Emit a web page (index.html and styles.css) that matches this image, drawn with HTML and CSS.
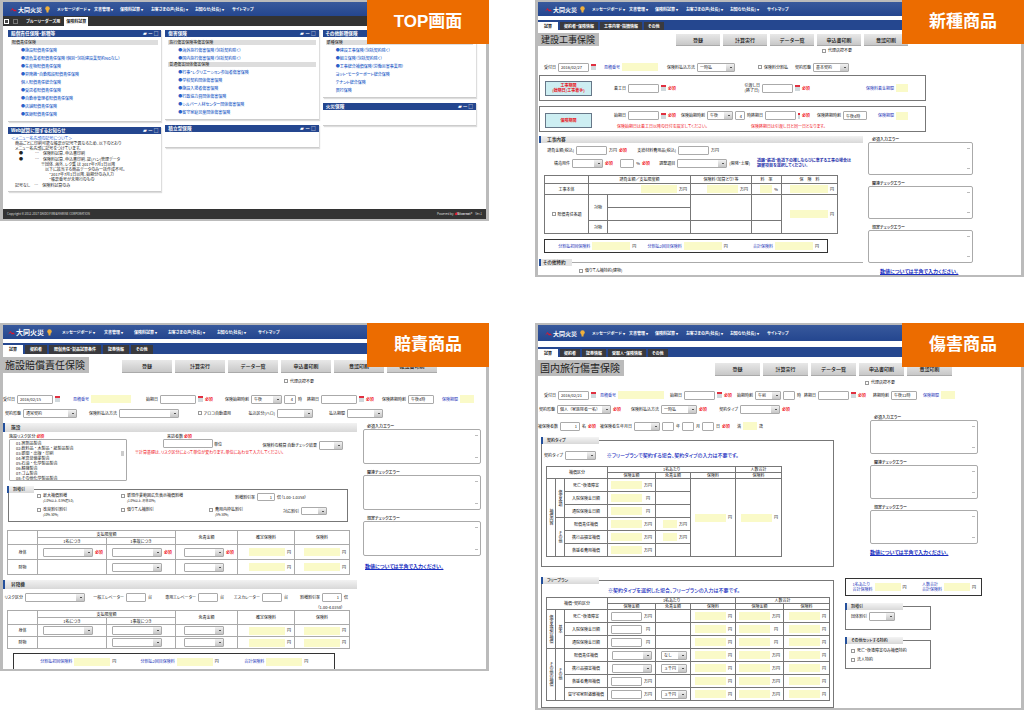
FILE: index.html
```html
<!DOCTYPE html>
<html lang="ja">
<head>
<meta charset="utf-8">
<title>保険料試算 画面一覧</title>
<link rel="stylesheet" href="styles.css">
</head>
<body>
<main class="gallery">

<section class="shot">
  <h2 class="badge">TOP画面</h2>
  <nav class="nav">
    <span class="logo"><svg class="bird" viewBox="0 0 14 10"><path d="M0 9 L5 2 L8 6 L11 5 L14 9 L10 8 L8 9 L5 5 Z"/></svg>大同火災<svg class="mascot" viewBox="0 0 10 14"><circle cx="5" cy="5" r="4.5"/><path d="M3 8h4v5H3z"/></svg></span>
    <a href="#">メッセージボード ▾</a><a href="#">文書管理 ▾</a><a href="#">保険料試算 ▾</a><a href="#">お客さまの声(社長) ▾</a><a href="#">お知らせ(社長) ▾</a><a href="#">サイトマップ</a>
  </nav>
  <div class="tabs tabs-dark"><i class="sq sq-on"></i><i class="sq"></i><a class="tab-plain" href="#">ブルーリーダーズ用</a><a class="tab on" href="#">保険料試算</a></div>
  <div class="panels">
    <div class="stack">
      <article class="panel"><h3>賠償責任保険・新種等<span>▰ ー □</span></h3>
        <h4>賠償責任保険</h4>
        <ul><li><a href="#">●施設賠償責任保険</a></li><li><a href="#">●請負業者賠償責任保険（個別・包括建設業契約NGなし）</a></li><li><a href="#">●生産物賠償責任保険</a></li><li><a href="#">●昇降機・自動階段賠償責任保険</a></li><li><a href="#">個人賠償責任総合保険</a></li><li><a href="#">●受託者賠償責任保険</a></li><li><a href="#">●自動車管理者賠償責任保険</a></li><li><a href="#">●店舗賠償責任保険</a></li><li><a href="#">●医師賠償責任保険</a></li></ul>
      </article>
      <article class="panel"><h3>Web試算に関するお知らせ<span>▰ ー □</span></h3>
        <div class="notice"><a href="#">＜メニュー名先頭の記号について＞</a>
          <p class="in1">商品ごとに印刷可能な帳票が記号で異なるため、以下のとおり</p><p class="in1">メニュー名先頭に記号をつけています。</p>
          <p class="in2">●　　　…　保険料試算、申込書印刷</p><p class="gap in2">●　　　…　保険料試算、申込書印刷、証(ハン)管理データ</p>
          <p class="in3">※団体、海外、レク集 は 2017年7月1日以降</p><p class="in3">　以下に該当する商品データのみ一括作成不可。</p><p class="in3">　　・2017年7月1日以降、始期分のみ入力</p><p class="in3">　　・帳票番号が未発行のもの</p>
          <p class="gap in1">記号なし　…　保険料試算のみ</p></div>
      </article>
    </div>
    <div class="stack">
      <article class="panel"><h3>傷害保険<span>▰ ー □</span></h3>
        <h4>旅行傷害保険等傷害保険</h4>
        <ul><li><a href="#">●海外旅行傷害保険（包括契約除く）</a></li><li><a href="#">●国内旅行傷害保険（包括契約除く）</a></li></ul>
        <h4>普通傷害団体傷害保険</h4>
        <ul><li><a href="#">●行事・レクリエーション参加者傷害保険</a></li><li><a href="#">●学校契約団体傷害保険</a></li><li><a href="#">●施設入場者傷害保険</a></li><li><a href="#">●行政協力員団体傷害保険</a></li><li><a href="#">●シルバー人材センター団体傷害保険</a></li><li><a href="#">●留守家庭児童団体傷害保険</a></li></ul>
      </article>
      <article class="panel panel-short"><h3>積立型保険<span>▰ ー □</span></h3></article>
    </div>
    <div class="stack">
      <article class="panel"><h3>その他新種保険</h3>
        <h4>新種保険</h4>
        <ul class="list-short"><li><a href="#">●建設工事保険（包括契約除く）</a></li><li><a href="#">●組立保険（包括契約除く）</a></li><li><a href="#">●工事総合補償保険（労働災害事業用）</a></li><li><a href="#">ヨット・モーターボート総合保険</a></li><li><a href="#">テナント総合保険</a></li><li><a href="#">興行保険</a></li></ul>
      </article>
      <article class="panel panel-short"><h3>火災保険<span>▰ ー □</span></h3></article>
    </div>
  </div>
  <footer class="foot"><span>Copyright © 2012-2017 DAIDO FIRE&amp;MARINE CORPORATION</span><span class="power">Powered by <b><i>●</i>Silvernet®</b>　Ver.1</span></footer>
</section>

<section class="shot">
  <h2 class="badge">新種商品</h2>
  <nav class="nav">
    <span class="logo"><svg class="bird" viewBox="0 0 14 10"><path d="M0 9 L5 2 L8 6 L11 5 L14 9 L10 8 L8 9 L5 5 Z"/></svg>大同火災<svg class="mascot" viewBox="0 0 10 14"><circle cx="5" cy="5" r="4.5"/><path d="M3 8h4v5H3z"/></svg></span>
    <a href="#">メッセージボード ▾</a><a href="#">文書管理 ▾</a><a href="#">保険料試算 ▾</a><a href="#">お客さまの声(社長) ▾</a><a href="#">お知らせ(社長) ▾</a><a href="#">サイトマップ</a>
  </nav>
  <div class="tabs"><a class="tab on" href="#">試算</a><a class="tab" href="#">契約者・保険情報</a><a class="tab" href="#">工事内容・指摘情報</a><a class="tab" href="#">その他</a></div>
  <div class="titlebar tb-b"><h1>建設工事保険</h1><div class="btns"><button type="button">登録</button><button type="button">計算実行</button><button type="button">データ一覧</button><button type="button">申込書印刷</button><button type="button">意認印刷</button></div></div>
  <div class="chkrow chk-b"><label class="c"><input type="checkbox">代理店控不要</label></div>
  <div class="row b1">
    <label class="f">受付日<input class="w30" value="2016/02/27"><i class="cal"></i></label>
    <label class="f blue">見積番号<output class="w36"></output></label>
    <label class="f">保険料払込方法<select class="w38"><option>一時払</option></select></label>
    <label class="f"><input type="checkbox">保険料分割払</label>
    <label class="f">契約形態<select class="w36"><option>基本契約</option></select></label>
  </div>
  <div class="box b2">
    <div class="teal">工事期間<br>(始期日/工事着手)</div>
    <label class="f">着工日<input class="w30"><i class="cal"></i><em>必須</em></label>
    <label class="f">引渡し日<br>(終了日)<input class="w30"><i class="cal"></i><em>必須</em></label>
    <label class="f blue">保険料着金期間<output class="w12"></output></label>
  </div>
  <div class="box b3">
    <div class="teal">保険期間</div>
    <label class="f">始期日<input class="w30"><i class="cal"></i><em>必須</em></label>
    <div class="f"><span>保険始期時刻</span><select class="w26" aria-label="午前午後"><option>午後</option></select><input class="w10" aria-label="時" value="4">時</div>
    <label class="f">終期日<input class="w30"><i class="cal"></i><em>必須</em></label>
    <label class="f">保険終期時刻<input class="w24" value="午後4時"></label>
    <label class="f blue">保険期間<output class="w12"></output></label>
    <p class="note n1">保険始期日は着工日以降の日付を設定してください。</p><p class="note n2">保険終期日は引渡し日と同一日となります。</p>
  </div>
  <div class="split split-b">
    <div>
      <h3 class="sec">工事内容</h3>
      <div class="row b4">
        <label class="f">請負金額(税込)<input class="w30">万円<em>必須</em></label>
        <label class="f">支給材料費用品(税込)<input class="w30">万円</label>
      </div>
      <div class="row b5">
        <label class="f">構造用件<select class="w30"></select><em>必須</em></label>
        <label class="f"><input class="w14" aria-label="割合">%<em>必須</em></label>
        <label class="f">調整項目<select class="w50"></select>(開発・土曜)</label>
        <p class="bluenote">道路・鉄道・軌道下の推しならびに準ずる工事の場合は<br>調整項目を選択してください。</p>
      </div>
      <table class="t tb">
        <colgroup><col><col><col><col><col><col></colgroup>
        <tr><th></th><th colspan="2">請負金額／支払限度額</th><th>保険料（加算とり）等</th><th>料　率</th><th>保　険　料</th></tr>
        <tr><td>工事本体</td><td colspan="2"><span class="v"><output class="w36"></output>万円</span></td><td><span class="v"><output class="w30"></output>万円</span></td><td><span class="v"><output class="w12"></output>%</span></td><td><span class="v"><output class="w38"></output>円</span></td></tr>
        <tr><td rowspan="3"><label class="c"><input type="checkbox">賠償責任条項</label></td><td rowspan="2">対物</td><td></td><td rowspan="2"></td><td rowspan="2"></td><td rowspan="3"><span class="v"><output class="w38"></output>円</span></td></tr>
        <tr><td></td></tr>
        <tr><td>対物</td><td></td><td></td><td></td></tr>
      </table>
      <div class="total total-b">
        <label class="f blue">分割払初回保険料<output class="w38"></output><span>円</span></label><label class="f blue">分割払2回目保険料<output class="w38"></output><span>円</span></label><label class="f blue">合計保険料<output class="w38"></output><span>円</span></label>
      </div>
      <h3 class="sec sec-line"><span>その他特約</span></h3>
      <div class="chkrow chk-b2"><label class="c"><input type="checkbox">借りてん補特約(建物)</label></div>
    </div>
    <aside class="errors">
      <label>必須入力エラー<textarea></textarea></label><label>関連チェックエラー<textarea></textarea></label><label>規定チェックエラー<textarea></textarea></label>
      <a href="#">数値については半角で入力ください。</a>
    </aside>
  </div>
</section>

<section class="shot shot-c">
  <h2 class="badge">賠責商品</h2>
  <nav class="nav">
    <span class="logo"><svg class="bird" viewBox="0 0 14 10"><path d="M0 9 L5 2 L8 6 L11 5 L14 9 L10 8 L8 9 L5 5 Z"/></svg>大同火災<svg class="mascot" viewBox="0 0 10 14"><circle cx="5" cy="5" r="4.5"/><path d="M3 8h4v5H3z"/></svg></span>
    <a href="#">メッセージボード ▾</a><a href="#">文書管理 ▾</a><a href="#">保険料試算 ▾</a><a href="#">お客さまの声(社長) ▾</a><a href="#">お知らせ(社長) ▾</a><a href="#">サイトマップ</a>
  </nav>
  <div class="tabs"><a class="tab on" href="#">試算</a><a class="tab" href="#">契約者</a><a class="tab" href="#">賠償責任・製品試算条件</a><a class="tab" href="#">証券情報</a><a class="tab" href="#">その他</a></div>
  <div class="titlebar tb-c"><h1>施設賠償責任保険</h1><div class="btns"><button type="button">登録</button><button type="button">計算実行</button><button type="button">データ一覧</button><button type="button">申込書印刷</button><button type="button">意認印刷</button><button type="button">確認書印刷</button></div></div>
  <div class="chkrow chk-c"><label class="c"><input type="checkbox">代理店控不要</label></div>
  <div class="row c1">
    <label class="f">受付日<input class="w36" value="2016/02/15"><i class="cal"></i></label>
    <label class="f blue">見積番号<output class="w40"></output></label>
    <label class="f">始期日<input class="w36"><i class="cal"></i><em>必須</em></label>
    <div class="f"><span>保険始期時刻</span><select class="w30" aria-label="午前午後"><option>午後</option></select><input class="w12" aria-label="時" value="4">時</div>
    <label class="f">終期日<input class="w36"><i class="cal"></i><em>必須</em></label>
    <label class="f">保険終期時刻<input class="w26" value="午後4時"></label>
    <label class="f blue">保険期間<output class="w14"></output></label>
  </div>
  <div class="row c2">
    <label class="f">契約形態<select class="w54"><option>通常契約</option></select></label>
    <label class="f">保険料払込方法<select class="w60"></select></label>
    <label class="f"><input type="checkbox">アロコ自動適用</label>
    <label class="f">払込区分(ハロ)<select class="w36"></select></label>
    <label class="f">払込期間<select class="w36"></select></label>
  </div>
  <div class="split split-c">
    <div>
      <h3 class="sec">施設</h3>
      <div class="risk">
        <label class="lb">施設リスク区分 <em>必須</em>
          <select size="8" class="list"><option>01:寒剤品製造</option><option>02:飲料品・木製品・紙製品製造</option><option>03:新聞・出版・印刷</option><option>04:家具装備業製造</option><option>05:石油・化学製品製造</option><option>06:精機製造</option><option>07:ゴム製造</option><option>08:その他化学製品製造</option></select></label>
        <div class="visit"><label class="lb">　来訪者数 <em>必須</em><br><input class="w50"> 単位</label><p class="note">※計算基礎は、リスク区分によって単位が変わります。単位にあわせて入力してください。</p></div>
        <label class="f">保険料の精算 自動チェック結果<select class="w24"></select></label>
      </div>
      <fieldset class="fs fs-c">
        <legend>割増引</legend>
        <div class="opts o1"><label class="c"><input type="checkbox">最大補償割増<small>(1.0%以上、0.5%超5.0)</small></label><label class="c"><input type="checkbox">新規作業範囲広告表示補償割増<small>(1.0%以上、標準10%)</small></label><label class="c">割増割引率<input class="w18" value="1">倍（1.00-1.0358）</label></div>
        <div class="opts o2"><label class="c"><input type="checkbox">改良割引割引<small>(10%-50%)</small></label><label class="c"><input type="checkbox">借りてん補割引</label><label class="c"><input type="checkbox">費用内枠払割引<small>(5%-50%)</small></label><label class="c">対応割引<select class="w26"></select></label></div>
      </fieldset>
      <table class="t tc">
        <colgroup><col><col><col><col><col><col></colgroup>
        <tr><th rowspan="2"></th><th colspan="2">支払限度額</th><th rowspan="2">免責金額</th><th rowspan="2">確定保険料</th><th rowspan="2">保険料</th></tr>
        <tr><th>1名につき</th><th>1事故につき</th></tr>
        <tr><td>身体</td><td><span class="v"><select class="w50"></select><em>必須</em></span></td><td><span class="v"><select class="w50"></select><em>必須</em></span></td><td><span class="v"><select class="w40"></select><em>必須</em></span></td><td><span class="v"><output class="w36"></output>円</span></td><td><span class="v"><output class="w36"></output>円</span></td></tr>
        <tr><td>財物</td><td></td><td><span class="v noreq"><select class="w50"></select></span></td><td><span class="v noreq"><select class="w40"></select></span></td><td><span class="v"><output class="w36"></output>円</span></td><td><span class="v"><output class="w36"></output>円</span></td></tr>
      </table>
      <h3 class="sec">昇降機</h3>
      <div class="row c3">
        <label class="f">リスク区分<select class="w60"></select></label>
        <label class="f">一般エレベーター<input class="w20">台</label>
        <label class="f">専用エレベーター<input class="w20">台</label>
        <label class="f">エスカレーター<input class="w20">台</label>
        <label class="f">割増割引率<input class="w20" value="1">倍</label>
      </div>
      <p class="hint">（1.00-4.0358）</p>
      <table class="t tc tc-low">
        <colgroup><col><col><col><col><col><col></colgroup>
        <tr><th rowspan="2"></th><th colspan="2">支払限度額</th><th rowspan="2">免責金額</th><th rowspan="2">確定保険料</th><th rowspan="2">保険料</th></tr>
        <tr><th>1名につき</th><th>1事故につき</th></tr>
        <tr><td>身体</td><td><span class="v noreq"><select class="w50"></select></span></td><td><span class="v noreq"><select class="w50"></select></span></td><td><span class="v noreq"><select class="w40"></select></span></td><td><span class="v"><output class="w36"></output>円</span></td><td><span class="v"><output class="w36"></output>円</span></td></tr>
        <tr><td>財物</td><td></td><td><span class="v noreq"><select class="w50"></select></span></td><td><span class="v noreq"><select class="w40"></select></span></td><td><span class="v"><output class="w36"></output>円</span></td><td><span class="v"><output class="w36"></output>円</span></td></tr>
      </table>
      <div class="total total-c">
        <label class="f blue">分割払初回保険料<output class="w36"></output><span>円</span></label><label class="f blue">分割払2回目保険料<output class="w36"></output><span>円</span></label><label class="f blue">合計保険料<output class="w36"></output><span>円</span></label>
      </div>
    </div>
    <aside class="errors">
      <label>必須入力エラー<textarea></textarea></label><label>関連チェックエラー<textarea></textarea></label><label>規定チェックエラー<textarea></textarea></label>
      <a href="#">数値については半角で入力ください。</a>
    </aside>
  </div>
</section>

<section class="shot shot-d">
  <h2 class="badge">傷害商品</h2>
  <nav class="nav">
    <span class="logo"><svg class="bird" viewBox="0 0 14 10"><path d="M0 9 L5 2 L8 6 L11 5 L14 9 L10 8 L8 9 L5 5 Z"/></svg>大同火災<svg class="mascot" viewBox="0 0 10 14"><circle cx="5" cy="5" r="4.5"/><path d="M3 8h4v5H3z"/></svg></span>
    <a href="#">メッセージボード ▾</a><a href="#">文書管理 ▾</a><a href="#">保険料試算 ▾</a><a href="#">お客さまの声(社長) ▾</a><a href="#">お知らせ(社長) ▾</a><a href="#">サイトマップ</a>
  </nav>
  <div class="tabs"><a class="tab on" href="#">試算</a><a class="tab" href="#">契約者</a><a class="tab" href="#">証券情報</a><a class="tab" href="#">受取人・保険情報</a><a class="tab" href="#">その他</a></div>
  <div class="titlebar tb-d"><h1>国内旅行傷害保険</h1><div class="btns"><button type="button">登録</button><button type="button">計算実行</button><button type="button">データ一覧</button><button type="button">申込書印刷</button><button type="button">意認印刷</button></div></div>
  <div class="chkrow chk-d"><label class="c"><input type="checkbox">代理店控不要</label></div>
  <div class="row d1">
    <label class="f">受付日<input class="w30" value="2016/02/21"><i class="cal"></i></label>
    <label class="f blue">見積番号<output class="w46"></output></label>
    <label class="f">始期日<input class="w30"><i class="cal"></i><em>必須</em></label>
    <div class="f"><span>始期時刻</span><select class="w26" aria-label="午前午後"><option>午前</option></select><input class="w12" aria-label="時">時</div>
    <label class="f">終期日<input class="w30"><i class="cal"></i><em>必須</em></label>
    <label class="f">終期時刻<input class="w26" value="午後12時"></label>
    <label class="f blue">保険期間<output class="w14"></output></label>
  </div>
  <div class="split split-d">
    <div>
      <div class="row d2">
        <label class="f">契約形態<select class="w54"><option>個人（家族除者一名）</option></select><em>必須</em></label>
        <label class="f">保険料払込方法<select class="w36"><option>一時払</option></select><em>必須</em></label>
        <label class="f">契約タイプ<select class="w40"></select><em>必須</em></label>
      </div>
      <div class="row d3">
        <label class="f">被保険者数<input class="w20" value="1">名<em>必須</em></label>
        <div class="f"><span>被保険者生年月日</span><select class="w26" aria-label="元号"></select><input class="w12" aria-label="年">年<input class="w12" aria-label="月">月<input class="w12" aria-label="日">日<em>必須</em></div>
        <label class="f">満<output class="w14"></output>歳</label>
      </div>
      <fieldset class="fs fs-d1">
        <legend>契約タイプ</legend>
        <div class="row d4"><label class="f">契約タイプ<select class="w30"></select></label><p class="lead">※フリープランで契約する場合、契約タイプの入力は不要です。</p></div>
        <table class="t td1">
          <colgroup><col><col><col><col><col><col><col></colgroup>
          <tr><th colspan="3" rowspan="2">補償区分</th><th colspan="3">1名あたり</th><th>人数合計</th></tr>
          <tr><th>保険金額</th><th>免責金額</th><th>保険料</th><th>保険料</th></tr>
          <tr><th rowspan="6"><span class="vt">補償内容</span></th><th rowspan="3"><span class="vt">傷害条項</span></th><th>死亡・後遺障害</th><td><span class="v"><output class="w30"></output>万円</span></td><td></td><td rowspan="6"><span class="v"><output class="w30"></output>円</span></td><td rowspan="6"><span class="v"><output class="w30"></output>円</span></td></tr>
          <tr><th>入院保険金日額</th><td><span class="v"><output class="w30"></output>円　</span></td><td></td></tr>
          <tr><th>通院保険金日額</th><td><span class="v"><output class="w30"></output>円　</span></td><td></td></tr>
          <tr><th rowspan="3"><span class="vt">その他</span></th><th>賠償責任補償</th><td><span class="v"><output class="w30"></output>万円</span></td><td><span class="v"><output class="w14"></output>万円</span></td></tr>
          <tr><th>携行品損害補償</th><td><span class="v"><output class="w30"></output>万円</span></td><td><span class="v"><output class="w14"></output>万円</span></td></tr>
          <tr><th>救援者費用補償</th><td><span class="v"><output class="w30"></output>万円</span></td><td></td></tr>
        </table>
      </fieldset>
      <fieldset class="fs fs-d2">
        <legend>フリープラン</legend>
        <p class="lead lead-2">※契約タイプを選択した場合、フリープランの入力は不要です。</p>
        <table class="t td2">
          <colgroup><col><col><col><col><col><col><col><col></colgroup>
          <tr><th colspan="3" rowspan="2">補償・契約区分</th><th colspan="3">1名あたり</th><th colspan="2">人数合計</th></tr>
          <tr><th>保険金額</th><th>免責金額</th><th>保険料</th><th>保険金額</th><th>保険料</th></tr>
          <tr><th rowspan="3"><span class="vt">傷害条項の補償</span></th><th rowspan="3"><span class="vt">基本</span></th><th>死亡・後遺障害</th><td><span class="v"><input class="w30" aria-label="死亡・後遺障害">万円</span></td><td></td><td><span class="v"><output class="w30"></output>円</span></td><td><span class="v"><output class="w30"></output>万円</span></td><td><span class="v"><output class="w30"></output>円</span></td></tr>
          <tr><th>入院保険金日額</th><td><span class="v"><input class="w30" aria-label="入院保険金日額">円　</span></td><td></td><td><span class="v"><output class="w30"></output>円</span></td><td><span class="v"><output class="w30"></output>円　</span></td><td><span class="v"><output class="w30"></output>円</span></td></tr>
          <tr><th>通院保険金日額</th><td><span class="v"><input class="w30" aria-label="通院保険金日額">円　</span></td><td></td><td><span class="v"><output class="w30"></output>円</span></td><td><span class="v"><output class="w30"></output>円　</span></td><td><span class="v"><output class="w30"></output>円</span></td></tr>
          <tr><th rowspan="4"><span class="vt">その他の補償</span></th><th rowspan="4"><span class="vt">その他</span></th><th>賠償責任補償</th><td><span class="v"><select class="w40" aria-label="賠償責任補償"></select></span></td><td><span class="v"><select class="w26" aria-label="免責"><option>なし</option></select></span></td><td><span class="v"><output class="w30"></output>円</span></td><td><span class="v"><output class="w30"></output>万円</span></td><td><span class="v"><output class="w30"></output>円</span></td></tr>
          <tr><th>携行品損害補償</th><td><span class="v"><select class="w40" aria-label="携行品損害補償"></select></span></td><td><span class="v"><select class="w26" aria-label="免責"><option>３千円</option></select></span></td><td><span class="v"><output class="w30"></output>円</span></td><td><span class="v"><output class="w30"></output>万円</span></td><td><span class="v"><output class="w30"></output>円</span></td></tr>
          <tr><th>救援者費用補償</th><td><span class="v"><input class="w30" aria-label="救援者費用補償">万円</span></td><td></td><td><span class="v"><output class="w30"></output>円</span></td><td><span class="v"><output class="w30"></output>万円</span></td><td><span class="v"><output class="w30"></output>円</span></td></tr>
          <tr><th>留守宅家財盗難補償</th><td><span class="v"><input class="w30" aria-label="留守宅家財盗難補償">万円</span></td><td><span class="v"><select class="w26" aria-label="免責"><option>３千円</option></select></span></td><td><span class="v"><output class="w30"></output>円</span></td><td><span class="v"><output class="w30"></output>万円</span></td><td><span class="v"><output class="w30"></output>円</span></td></tr>
        </table>
      </fieldset>
    </div>
    <div>
      <aside class="errors">
        <label>必須入力エラー<textarea></textarea></label><label>関連チェックエラー<textarea></textarea></label><label>規定チェックエラー<textarea></textarea></label>
        <a href="#">数値については半角で入力ください。</a>
      </aside>
      <div class="total total-d"><label class="f blue">1名あたり<br>合計保険料<output class="w26"></output><span>円</span></label><label class="f blue">人数合計<br>合計保険料<output class="w26"></output><span>円</span></label></div>
      <fieldset class="fs fs-side"><legend>割増引</legend><label class="c">団体割引<select class="w26"></select></label></fieldset>
      <fieldset class="fs fs-side fs-side2"><legend>その他セットする特約</legend><label class="c"><input type="checkbox">死亡・後遺障害のみ補償特約</label><label class="c"><input type="checkbox">法人特約</label></fieldset>
    </div>
  </div>
</section>

</main>
</body>
</html>
```
FILE: styles.css
```css
* { box-sizing: border-box; }
body {
  margin: 0; background: #fff; color: #111;
  font: 4px/5px "Noto Sans CJK JP", sans-serif;
  font-feature-settings: "palt";
}
h1, h2, h3, h4, p, ul { margin: 0; padding: 0; font-weight: 400; }
a { color: inherit; text-decoration: none; }
em { font-style: normal; font-weight: 700; color: #f01020; }
.blue { color: #2233b8; }
.blue span { color: #111; }

.gallery { display: grid; grid-template-columns: minmax(0, 1fr) minmax(0, 1fr); column-gap: 46px; row-gap: 46px; align-items: start; }
.shot { position: relative; border: solid #bbb; border-width: 2px 3px; white-space: nowrap; }
.badge {
  position: absolute; z-index: 2; top: -2px; right: -3px; width: 122px; height: 44px;
  background: #ec6c00; color: #fff; text-align: center;
  font: 700 17px/44px "Liberation Sans", "Noto Sans CJK JP", sans-serif;
  font-feature-settings: normal;
}

/* header */
.nav {
  display: grid; grid-template-columns: 54fr 37fr 26fr 31fr 44fr 37fr 254fr; align-items: center;
  height: 14px; background: linear-gradient(#38599c, #24468f); color: #fff; font-weight: 700;
}
.nav > * { min-width: 0; }
.shot-c .nav { grid-template-columns: 59fr 42fr 30fr 34fr 49fr 41fr 228fr; }
.shot-d .nav { height: 16px; }
.logo { display: flex; align-items: center; gap: 1px; padding-left: 7px; font-size: 6px; }
.shot-c .logo { padding-left: 5px; font-size: 7px; }
.bird { width: 7px; height: 5px; fill: #e0142c; }
.mascot { width: 5px; height: 7px; fill: #f0b03c; margin-left: 2px; }
.tabs { display: flex; align-items: flex-end; gap: 2px; height: 10px; margin-top: 4px; background: #25478f; color: #fff; font-weight: 700; }
.shot-c .tabs { height: 11px; }
.shot-d .tabs { margin-top: 6px; }
.tab { padding: 2px 4px; background: #3a3a3e; line-height: 4px; }
.tab.on { padding: 2px 6px; background: #fff; color: #222; }
.shot-c .tab { padding: 2px 5px; line-height: 5px; }
.shot-c .tab.on { padding: 2px 6px; }
.tabs-dark { margin-top: 0; background: #333; align-items: center; padding-left: 1px; }
.tabs-dark .tab { margin-left: 2px; line-height: 5px; padding: 2px 2px; align-self: flex-end; }
.tab-plain { margin-left: 4px; }
.sq { width: 5px; height: 5px; border: 1px solid #777; margin-right: 2px; }
.sq-on { background: #444; border-color: #fff; }

/* top page */
.panels { display: grid; grid-template-columns: repeat(3, minmax(0, 1fr)); gap: 4px; padding: 4px 10px 17px 5px; }
.stack { display: flex; flex-direction: column; gap: 5px; }
.panel { padding-bottom: 3px; border-bottom: 1px solid #ccc; box-shadow: 1px 1px 1px #ddd; }
.panel h3 { display: flex; justify-content: space-between; padding: 1px 3px; background: #24468f; color: #fff; font-weight: 700; }
.panel h3 span { font-weight: 400; }
.panel h4 { margin: 3px 3px 1px; padding: 0 1px; background: #ddd; }
.panel ul + h4 { margin-top: 0; }
.panel ul { list-style: none; }
.panel li { padding-left: 13px; line-height: 8px; color: #2a5fc8; font-weight: 500; }
.panel-short { min-height: 23px; }
.notice { display: grid; padding: 2px 3px 0; color: #222; line-height: 5px; }
.notice a { color: #1a56d0; }
.in1 { padding-left: 4px; }
.in2 { padding-left: 8px; }
.in3 { padding-left: 30px; }
.notice .gap { margin-top: 1px; }
.foot { display: flex; justify-content: space-between; align-items: center; height: 10px; padding: 0 4px; background: #333; color: #ddd; font-size: 3px; }
.foot i { color: #e02030; }

/* title and actions */
.titlebar { display: grid; align-items: end; padding-top: 3px; }
.tb-b { grid-template-columns: 138fr 345fr; }
.tb-c { grid-template-columns: 119fr 364fr; }
.tb-d { grid-template-columns: 177fr 306fr; }
.titlebar h1 { justify-self: start; padding: 0 4px 0 3px; background: #bbb; color: #222; font-size: 9px; line-height: 13px; font-feature-settings: normal; }
.tb-c h1, .tb-d h1 { padding-left: 2px; font-size: 10px; line-height: 16px; }
.btns { display: flex; gap: 3px; }
button { width: 44px; height: 12px; padding: 0; border: 0; border-bottom: 1px solid #aaa; background: linear-gradient(#e8e8e8, #c8c8c8); color: #111; font: 500 5px/10px "Noto Sans CJK JP", sans-serif; }
.tb-c button { width: 50px; height: 13px; }
.tb-d button { width: 45px; height: 13px; }
.chkrow { display: flex; min-height: 9px; align-items: center; }
.chk-b { padding-left: 284px; margin-bottom: 6px; }
.chk-b2 { padding-left: 41px; }
.chk-c { padding-left: 281px; min-height: 16px; margin-bottom: 4px; }
.chk-d { padding-left: 327px; min-height: 13px; }

/* fields */
.row { display: grid; align-items: center; min-height: 12px; }
.f, .c { display: flex; align-items: center; gap: 2px; min-width: 0; }
.f { justify-content: flex-end; }
input, select, textarea { margin: 0; border: 1px solid #aaa; border-radius: 1px; background: #fff; color: #222; font: 4px/5px "Noto Sans CJK JP", sans-serif; }
input, select { flex: none; height: 9px; padding: 0 2px; }
input.w10, input.w12, input.w18, input.w20 { text-align: right; }
input[type="checkbox"] { appearance: none; width: 4px; height: 4px; padding: 0; border-radius: 0; border-color: #999; }
select {
  appearance: none;
  background: linear-gradient(#555, #555) right 2px center / 2px 1px no-repeat, linear-gradient(#f2f2f2, #c6c6c6) right / 8px 100% no-repeat, #fff;
}
output { flex: none; height: 8px; background: #fafac8; }
.cal { width: 5px; height: 6px; border-top: 2px solid #e03040; background: #d0d8dc; }
.w10 { width: 10px; } .w12 { width: 12px; } .w14 { width: 14px; } .w18 { width: 18px; } .w20 { width: 20px; }
.w24 { width: 24px; } .w26 { width: 26px; } .w30 { width: 31px; } .w36 { width: 36px; } .w38 { width: 38px; }
.w40 { width: 40px; } .w46 { width: 46px; } .w50 { width: 50px; } .w54 { width: 54px; } .w60 { width: 60px; }

.b1 { grid-template-columns: 58fr 62fr 77fr 53fr 61fr 172fr; }
.box { display: grid; align-items: center; min-height: 26px; margin: 2px 95px 5px 1px; border: 1px solid #777; }
.b2 { grid-template-columns: 52fr 84fr 134fr 98fr 17fr; }
.b3 { grid-template-columns: 52fr 84fr 75fr 59fr 57fr 41fr 17fr; margin-bottom: 4px; padding-top: 3px; }
.teal { display: grid; place-content: center; min-height: 15px; margin-left: 5px; border: 1px solid #678; background: #cdeef2; color: #e81020; font-weight: 700; text-align: center; grid-row: span 2; }
.b2 .teal { grid-row: auto; }
.note { color: #f01020; line-height: 4px; }
.n1 { grid-column: 2 / 4; padding: 1px 0 2px 25px; }
.n2 { grid-column: 4 / 8; padding: 1px 0 2px; }
.b4 { grid-template-columns: 89fr 92fr 144fr; min-height: 14px; }
.b5 { grid-template-columns: 75fr 37fr 100fr 113fr; }
.bluenote { padding-left: 7px; color: #1a2ca8; font-weight: 700; line-height: 5px; min-width: 0; }

.split { display: grid; align-items: start; }
.split > * { min-width: 0; }
.split-b { grid-template-columns: 325fr 158fr; }
.split-c { grid-template-columns: 354fr 129fr; margin-top: 4px; }
.split-d { grid-template-columns: 296fr 176fr; column-gap: 11px; }
.sec { padding: 1px 6px; border-left: 2px solid #24509c; background: linear-gradient(#f2f2f2, #d8d8d8); font-weight: 500; }
.split-c .sec { padding: 2px 6px; }
.split-b .sec { margin-left: 1px; }
.split-b .sec-line { padding: 0; background: linear-gradient(#aaa, #aaa) center / 100% 1px no-repeat; }
.sec-line span { display: inline-block; padding: 1px 6px 1px 2px; background: #e4e4e4; }

.errors { display: grid; font-weight: 500; }
.errors label { display: block; line-height: 6px; padding-bottom: 5px; text-indent: 4px; }
.errors textarea {
  display: block; width: 100%; height: 33px; border-radius: 2px; resize: none; overflow: hidden;
  background: linear-gradient(#bbb, #bbb) right 2px top 5px / 3px 1px no-repeat, linear-gradient(#bbb, #bbb) right 2px bottom 5px / 3px 1px no-repeat, #fff;
}
.errors a { color: #1a2fc0; font-size: 5px; font-weight: 700; line-height: 6px; text-decoration: underline; text-decoration-thickness: 1px; }
.split-b .errors { padding: 0 48px 0 5px; }
.split-b .errors a { padding-left: 12px; }
.split-c .errors { padding: 0 5px 0 6px; }
.split-c textarea { height: 35px; }
.split-d .errors { padding: 13px 43px 23px 25px; }
.split-d textarea { height: 34px; }
.split-c .errors a { padding: 2px; }

/* tables */
.t { border-collapse: collapse; table-layout: fixed; }
.t th, .t td { height: 13px; padding: 0; border: 1px solid #777; font-weight: 400; line-height: 5px; text-align: center; }
.v { display: flex; justify-content: flex-end; align-items: center; gap: 2px; padding-right: 3px; }
.v output { height: 8px; }
.noreq { padding-right: 13px; }
.vt { writing-mode: vertical-rl; line-height: 5px; text-orientation: upright; }

.tb { width: calc(100% - 32px); margin: 6px 26px 5px 6px; }
.tb tr:first-child th { height: 8px; }
.tb tr:nth-child(2) td { height: 11px; }
.tb td .c { justify-content: center; }
.tb col:nth-child(1) { width: 44px; } .tb col:nth-child(2) { width: 19px; } .tb col:nth-child(3) { width: 83px; }
.tb col:nth-child(4) { width: 61px; } .tb col:nth-child(5) { width: 30px; } .tb col:nth-child(6) { width: 56px; }

.total { display: grid; align-items: center; border: 1px solid #333; }
.total-b { grid-template-columns: 92fr 92fr 92fr 8fr; min-height: 14px; margin: 0 35px 6px 6px; }

.c1 { grid-template-columns: 57fr 71fr 82fr 89fr 72fr 60fr 40fr 12fr; }
.c2 { grid-template-columns: 74fr 102fr 52fr 82fr 70fr 103fr; margin-top: 2px; }
.risk { display: grid; grid-template-columns: 124fr 147fr 69fr 14fr; align-items: start; padding-top: 2px; min-height: 54px; }
.risk > * { min-width: 0; }
.risk > .f { padding-top: 7px; }
.risk .lb { padding-left: 6px; }
.list { display: block; width: 100%; height: 42px; padding: 0; background: linear-gradient(#ccc, #ccc) right 2px top 11px / 3px 5px no-repeat, #fff; overflow: hidden; }
.list option { height: 5px; min-height: 0; padding: 0 6px; font-size: 4px; line-height: 5px; overflow: hidden; }
.visit { padding-left: 8px; }
.visit .lb { padding-left: 28px; display: block; }
.visit .note { padding-top: 2px; }
.fs { min-width: 0; margin: 0; padding: 0; border: 1px solid #777; }
.fs legend { margin-left: -1px; padding: 1px 6px 1px 4px; min-width: 58px; border-left: 2px solid #24509c; background: linear-gradient(#f4f4f4, #d8d8d8); font-weight: 500; }
.fs-c { margin: 0 9px 8px 5px; padding-left: 28px; min-height: 36px; }
.fs-c legend { margin-left: -30px; min-width: 27px; }
.opts { display: grid; align-items: start; min-height: 14px; }
.opts > * { min-width: 0; flex-wrap: wrap; align-content: flex-start; }
.opts small { width: 100%; padding-left: 6px; font-size: 3px; line-height: 3px; }
.opts input.w18, .opts select { height: 8px; }
.o1 { grid-template-columns: 84fr 114fr 112fr; }
.o2 { grid-template-columns: 84fr 88fr 74fr 64fr; }
.tc { width: calc(100% - 13px); margin: 0 9px 5px 4px; }
.tc th, .tc td { border-color: #aaa; }
.tc th { height: 7px; }
.tc td { height: 15px; }
.tc-low { margin-bottom: 4px; }
.tc-low td { height: 12px; }
.tc col:nth-child(1) { width: 30px; } .tc col:nth-child(2) { width: 69px; } .tc col:nth-child(3) { width: 69px; }
.tc col:nth-child(4) { width: 62px; } .tc col:nth-child(5) { width: 57px; } .tc col:nth-child(6) { width: 55px; }
.c3 { grid-template-columns: 82fr 67fr 72fr 64fr 60fr 9fr; min-height: 16px; }
.hint { padding: 0 14px 0 0; text-align: right; }
.total-c { grid-template-columns: 103fr 103fr 90fr 26fr; min-height: 16px; margin: 0 22px 0 10px; border-bottom: 0; }

.d1 { grid-template-columns: 58fr 68fr 68fr 69fr 65fr 51fr 38fr 66fr; }
.d2 { grid-template-columns: 83fr 86fr 83fr 44fr; min-height: 16px; }
.d3 { grid-template-columns: 58fr 134fr 33fr 71fr; min-height: 18px; }
.fs-d1 { min-height: 130px; margin: 2px 0 10px 3px; padding-left: 4px; }
.fs-d2 { min-height: 131px; margin-left: 3px; padding-left: 4px; }
.fs-d1 legend, .fs-d2 legend { margin-left: -5px; }
.d4 { grid-template-columns: 50fr 238fr; min-height: 22px; }
.lead { padding-left: 11px; color: #1a2fc0; font-size: 5px; font-weight: 500; line-height: 6px; }
.lead-2 { padding: 3px 0 4px 62px; }
.td1 { width: calc(100% - 54px); }
.td2 { width: calc(100% - 5px); }
.td1 tr:nth-child(-n+2) th, .td2 tr:nth-child(-n+2) th { height: 6px; }
.td1 col:nth-child(-n+2), .td2 col:nth-child(-n+2) { width: 9px; }
.td1 col:nth-child(3), .td2 col:nth-child(3) { width: 43px; }
.td1 col:nth-child(4), .td2 col:nth-child(4) { width: 48px; }
.td1 col:nth-child(5), .td2 col:nth-child(5) { width: 35px; }
.td1 col:nth-child(6), .td2 col:nth-child(6) { width: 45px; }
.td1 col:nth-child(7), .td2 col:nth-child(8) { width: 46px; }
.td2 col:nth-child(7) { width: 48px; }
.total-d { grid-template-columns: 61fr 70fr 5fr; min-height: 18px; margin: 0 39px 7px 0; }
.fs-side { min-height: 27px; margin-right: 90px; padding: 2px 5px; }
.fs-side legend { margin-left: -6px; }
.fs-side2 { min-height: 32px; margin-top: 7px; }
.fs-side2 .c { min-height: 9px; }
```
